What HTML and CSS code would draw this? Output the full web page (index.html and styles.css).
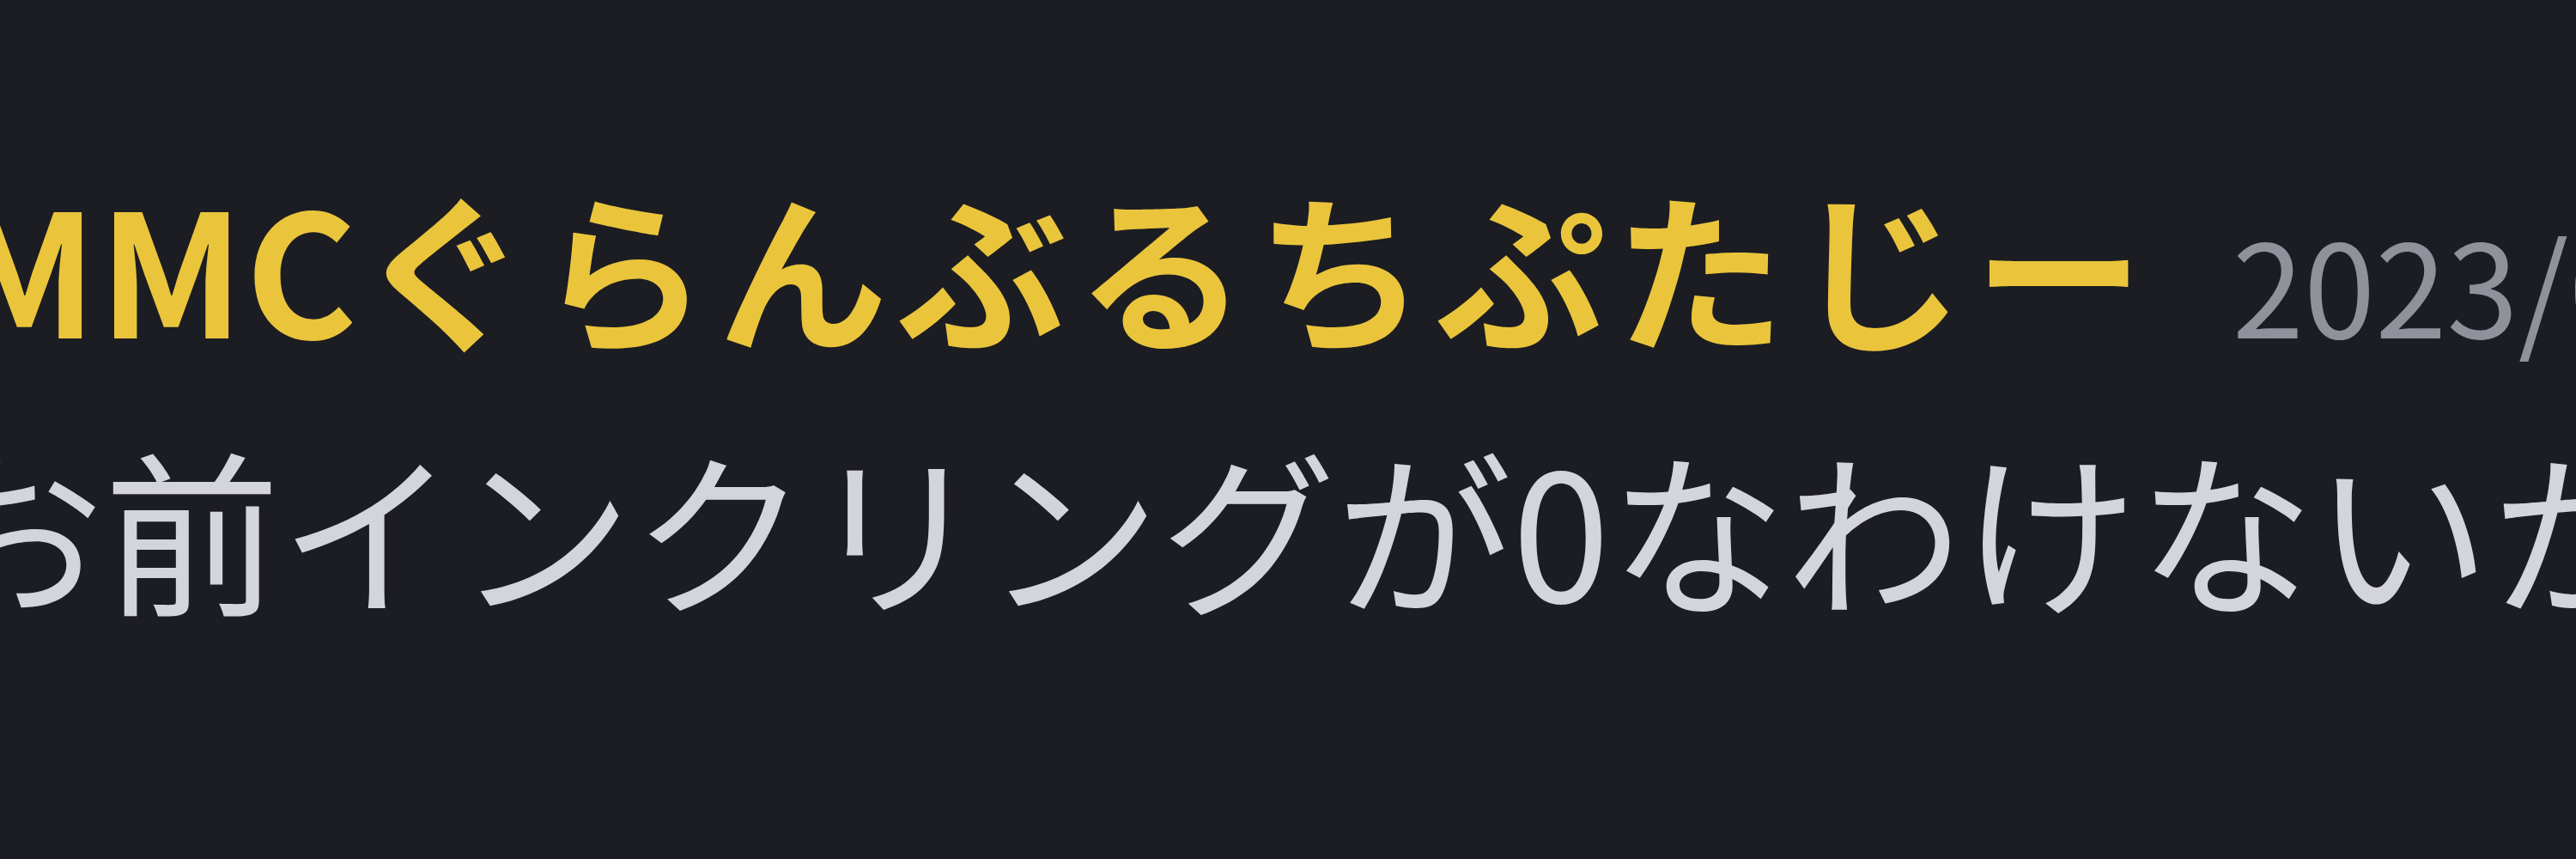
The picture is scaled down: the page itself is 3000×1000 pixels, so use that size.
FILE: index.html
```html
<!DOCTYPE html>
<html lang="ja">
<head>
  <meta charset="UTF-8">
  <title>Comment</title>
  <meta name="viewport" content="width=device-width, initial-scale=1.0">
  <link rel="stylesheet" href="styles.css">
</head>
<body>

<div class="comment">
  <div class="comment-head">
    <span class="comment-name"><span class="comment-tag">MMC</span>ぐらんぶるちぷたじー</span>
    <span class="comment-date">2023/03/18 21:04</span>
  </div>
  <p class="comment-text">お前インクリングが0なわけないか</p>
</div>

</body>
</html>
```

FILE: styles.css
```css
html, body {
  overflow: hidden;
}
body {
  margin: 0;
  background: #1c1d22;
  font-family: "Noto Sans CJK JP", "Noto Sans", sans-serif;
  height: 1000px;
}
.comment {
  padding-top: 183px;
  white-space: nowrap;
}
.comment-head {
  display: flex;
  align-items: baseline;
  gap: 92px;
  margin-left: -56px;
  line-height: 250px;
}
.comment-name {
  color: #eac53c;
  font-size: 198px;
  font-weight: 700;
  letter-spacing: 11px;
}
.comment-tag {
  letter-spacing: 2px;
}
.comment-date {
  color: #8f919b;
  font-size: 150px;
}
.comment-text {
  margin: 33px 0 0 -84px;
  color: #d4d5da;
  font-size: 205px;
  line-height: 250px;
}
```
